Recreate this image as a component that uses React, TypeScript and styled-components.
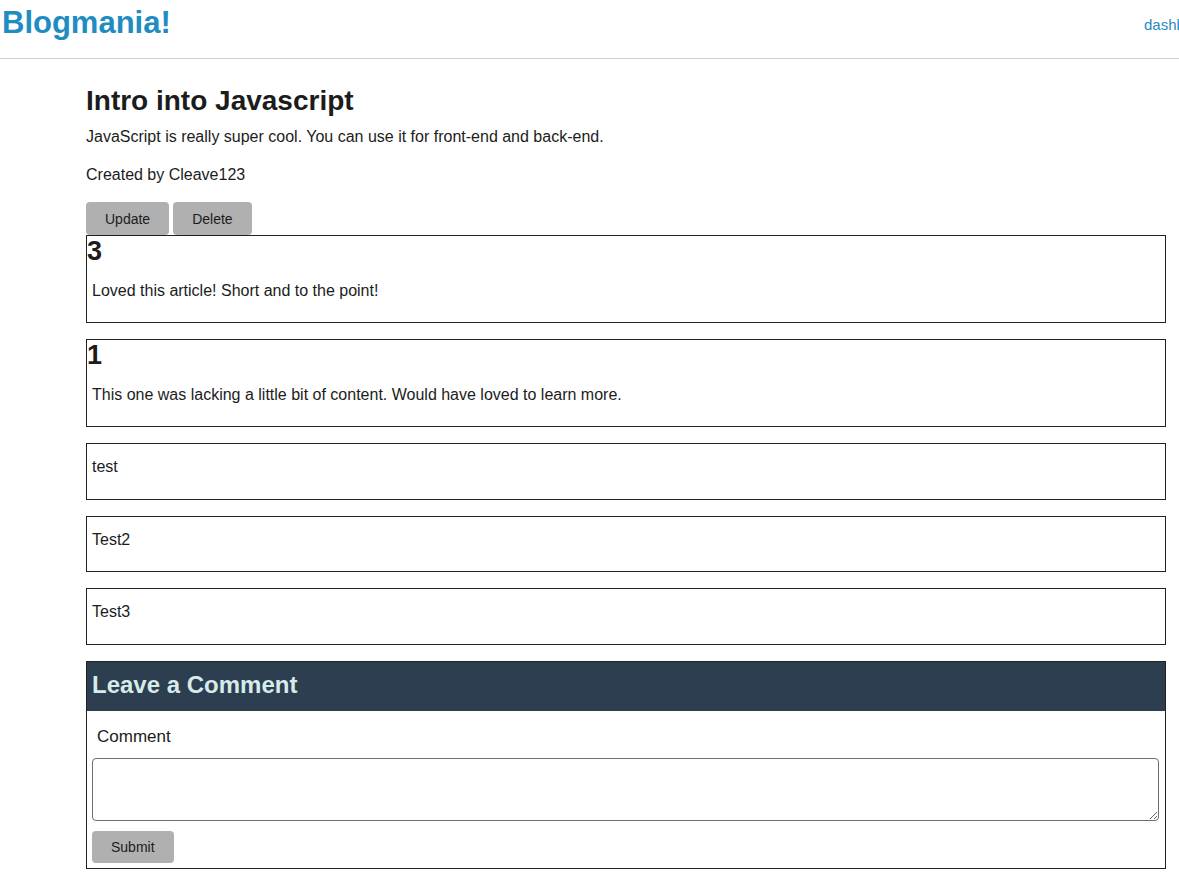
import React from "react";
import styled, { createGlobalStyle } from "styled-components";

const GlobalStyle = createGlobalStyle`
    body {
        margin: 0;
        font-family: "Liberation Sans", Arial, Helvetica, sans-serif;
        color: #1c1c1c;
        background: #fff;
        overflow-x: hidden;
    }
`;

const Header = styled.header`
    display: flex;
    align-items: flex-start;
    height: 59px;
    padding-top: 5px;
    box-sizing: border-box;
    border-bottom: 1px solid #cfcfcf;
    overflow: hidden;
`;

const Logo = styled.h1`
    margin: 0 0 0 2px;
    font-size: 31px;
    line-height: 35px;
    font-weight: 700;
    color: #1f8cc2;
`;

const Nav = styled.nav`
    margin-left: auto;
    width: 35px;
    flex-shrink: 0;
    padding-top: 11px;
    white-space: nowrap;
    font-size: 15px;
    line-height: 18px;
`;

const NavLink = styled.a`
    color: #1f8cc2;
    text-decoration: none;
`;

const Main = styled.main`
    margin: 0 13px 0 86px;
    padding-top: 26px;
`;

const Title = styled.h1`
    margin: 0 0 11px;
    font-size: 28px;
    line-height: 32px;
    font-weight: 700;
`;

const Text = styled.p<{ gap?: number }>`
    margin: 0 0 ${props => props.gap ?? 0}px;
    font-size: 16px;
    line-height: 18px;
`;

const ButtonRow = styled.div`
    display: flex;
    gap: 4px;
    margin-top: 18px;
`;

const GreyButton = styled.button<{ tall?: boolean }>`
    height: ${props => props.tall ? '33px' : '32px'};
    padding: 0 19px;
    border: none;
    border-radius: 4px;
    background: #b0b0b0;
    color: #1c1c1c;
    font-family: inherit;
    font-size: 14px;
    cursor: pointer;
`;

const ReviewCard = styled.div`
    border: 1px solid #222;
    margin-bottom: 16px;
`;

const Rating = styled.h2`
    margin: 0;
    font-size: 27px;
    line-height: 31.5px;
    font-weight: 700;
`;

const ReviewText = styled.p`
    margin: 14px 5px 22.5px;
    font-size: 16px;
    line-height: 18px;
`;

const CommentForm = styled.form`
    border: 1px solid #222;
    margin-bottom: 12px;
`;

const FormHeader = styled.h3`
    margin: 0;
    padding: 9px 5px 13px;
    background: #2c3e50;
    color: #d6ebea;
    font-size: 24px;
    line-height: 27px;
    font-weight: 700;
`;

const FormBody = styled.div`
    display: flex;
    flex-direction: column;
    align-items: flex-start;
    padding: 15px 6px 5px 5px;
`;

const Label = styled.label`
    padding-left: 5px;
    margin-bottom: 11px;
    padding-top: 1px;
    font-size: 17px;
    line-height: 20px;
`;

const TextArea = styled.textarea`
    width: 100%;
    height: 63px;
    box-sizing: border-box;
    margin: 0 0 10px;
    border: 1px solid #6f6f6f;
    border-radius: 4px;
    font-family: inherit;
`;

const reviews = [
    { rating: '3', text: 'Loved this article! Short and to the point!' },
    { rating: '1', text: 'This one was lacking a little bit of content. Would have loved to learn more.' },
    { text: 'test' },
    { text: 'Test2' },
    { text: 'Test3' },
];

const App = () => {
    return (
        <>
            <GlobalStyle />
            <Header>
                <Logo>Blogmania!</Logo>
                <Nav>
                    <NavLink href="#">dashboard</NavLink>
                </Nav>
            </Header>
            <Main>
                <Title>Intro into Javascript</Title>
                <Text gap={20}>JavaScript is really super cool. You can use it for front-end and back-end.</Text>
                <Text>Created by Cleave123</Text>
                <ButtonRow>
                    <GreyButton tall>Update</GreyButton>
                    <GreyButton tall>Delete</GreyButton>
                </ButtonRow>
                {reviews.map((review, i) => (
                    <ReviewCard key={i}>
                        {review.rating && <Rating>{review.rating}</Rating>}
                        <ReviewText>{review.text}</ReviewText>
                    </ReviewCard>
                ))}
                <CommentForm onSubmit={e => e.preventDefault()}>
                    <FormHeader>Leave a Comment</FormHeader>
                    <FormBody>
                        <Label htmlFor="comment">Comment</Label>
                        <TextArea id="comment" />
                        <GreyButton type="submit">Submit</GreyButton>
                    </FormBody>
                </CommentForm>
            </Main>
        </>
    );
};

export default App;
